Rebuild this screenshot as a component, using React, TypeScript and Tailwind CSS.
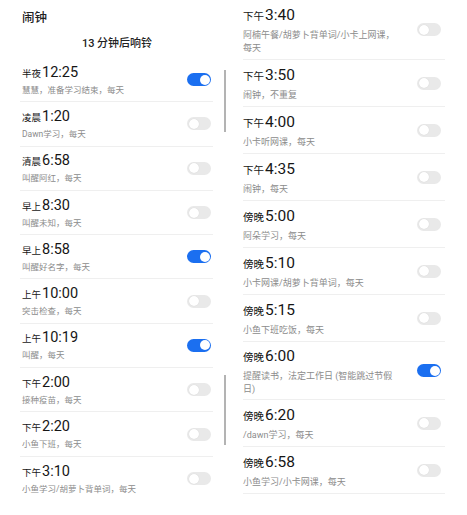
import React from "react";

type Alarm = { p: string; t: string; s: string[]; on?: boolean };

const left: Alarm[] = [
  { p: "半夜", t: "12:25", s: ["慧慧，准备学习结束，每天"], on: true },
  { p: "凌晨", t: "1:20", s: ["Dawn学习，每天"] },
  { p: "清晨", t: "6:58", s: ["叫醒阿红，每天"] },
  { p: "早上", t: "8:30", s: ["叫醒未知，每天"] },
  { p: "早上", t: "8:58", s: ["叫醒好名字，每天"], on: true },
  { p: "上午", t: "10:00", s: ["突击检查，每天"] },
  { p: "上午", t: "10:19", s: ["叫醒，每天"], on: true },
  { p: "下午", t: "2:00", s: ["接种疫苗，每天"] },
  { p: "下午", t: "2:20", s: ["小鱼下班，每天"] },
  { p: "下午", t: "3:10", s: ["小鱼学习/胡萝卜背单词，每天"] },
];

const right: Alarm[] = [
  { p: "下午", t: "3:40", s: ["阿楠午餐/胡萝卜背单词/小卡上网课，", "每天"] },
  { p: "下午", t: "3:50", s: ["闹钟，不重复"] },
  { p: "下午", t: "4:00", s: ["小卡听网课，每天"] },
  { p: "下午", t: "4:35", s: ["闹钟，每天"] },
  { p: "傍晚", t: "5:00", s: ["阿朵学习，每天"] },
  { p: "傍晚", t: "5:10", s: ["小卡网课/胡萝卜背单词，每天"] },
  { p: "傍晚", t: "5:15", s: ["小鱼下班吃饭，每天"] },
  { p: "傍晚", t: "6:00", s: ["提醒读书，法定工作日 (智能跳过节假", "日)"], on: true },
  { p: "傍晚", t: "6:20", s: ["/dawn学习，每天"] },
  { p: "傍晚", t: "6:58", s: ["小鱼学习/小卡网课，每天"] },
];

function Toggle({ on }: { on?: boolean }) {
  return on ? (
    <div className="w-[24px] h-[13px] rounded-full bg-[#1b6ff0] flex items-center justify-end px-[1.5px]">
      <div className="w-[10px] h-[10px] rounded-full bg-white" />
    </div>
  ) : (
    <div className="w-[24px] h-[13px] rounded-full bg-[#e9e9e9] flex items-center justify-start px-[1.5px]">
      <div className="w-[10px] h-[10px] rounded-full bg-white shadow-[0_0_1px_rgba(0,0,0,0.15)]" />
    </div>
  );
}

export default function App() {
  const font = { fontFamily: 'Roboto, "Noto Sans CJK SC", sans-serif' };
  return (
    <div className="w-[467px] h-[515px] bg-white flex relative overflow-hidden text-[#161616]" style={font}>
      {/* Left column */}
      <div className="w-[234px] flex flex-col pt-[10px]">
        <div className="pl-[22px] text-[12.5px] leading-[16px] font-medium text-[#222]">闹钟</div>
        <div className="mt-[10px] text-center text-[11px] leading-[16px] font-medium text-[#222]">13 分钟后响铃</div>
        <div className="mt-[6px] pl-[20px] w-[213px] flex flex-col">
          {left.map((a, i) => (
            <div
              key={i}
              className={`h-[44.3px] flex items-center justify-between pl-[2px] pr-[2px] ${i < left.length - 1 ? "border-b border-[#efefef]" : ""}`}
            >
              <div className="flex flex-col">
                <div className="leading-[18px] flex items-baseline">
                  <span className="text-[9.5px]">{a.p}</span>
                  <span className="text-[14.5px] ml-[1px]">{a.t}</span>
                </div>
                {a.s.map((l, j) => (
                  <div key={j} className="text-[8.5px] leading-[12px] text-[#8c8c8c] mt-[1px]">{l}</div>
                ))}
              </div>
              <Toggle on={a.on} />
            </div>
          ))}
        </div>
      </div>
      {/* Right column */}
      <div className="w-[233px] pl-[9px] flex flex-col">
        <div className="w-[202px] flex flex-col">
          {right.map((a, i) => (
            <div
              key={i}
              className={`${a.s.length > 1 ? (i === 0 ? "h-[60px]" : "h-[58px]") : "h-[47px]"} flex items-center justify-between pr-[4px] border-b border-[#efefef]`}
            >
              <div className="flex flex-col">
                <div className="leading-[20px] flex items-baseline">
                  <span className="text-[10.5px]">{a.p}</span>
                  <span className="text-[15.5px] ml-[1px]">{a.t}</span>
                </div>
                <div className="mt-[2px]">
                  {a.s.map((l, j) => (
                    <div key={j} className="text-[9px] leading-[13px] text-[#8c8c8c]">{l}</div>
                  ))}
                </div>
              </div>
              <Toggle on={a.on} />
            </div>
          ))}
        </div>
      </div>
      {/* scroll indicators */}
      <div className="absolute left-[224px] top-[70px] w-[2px] h-[62px] bg-[#b3b3b3]" />
      <div className="absolute left-[224px] top-[375px] w-[2px] h-[70px] bg-[#b3b3b3]" />
    </div>
  );
}
